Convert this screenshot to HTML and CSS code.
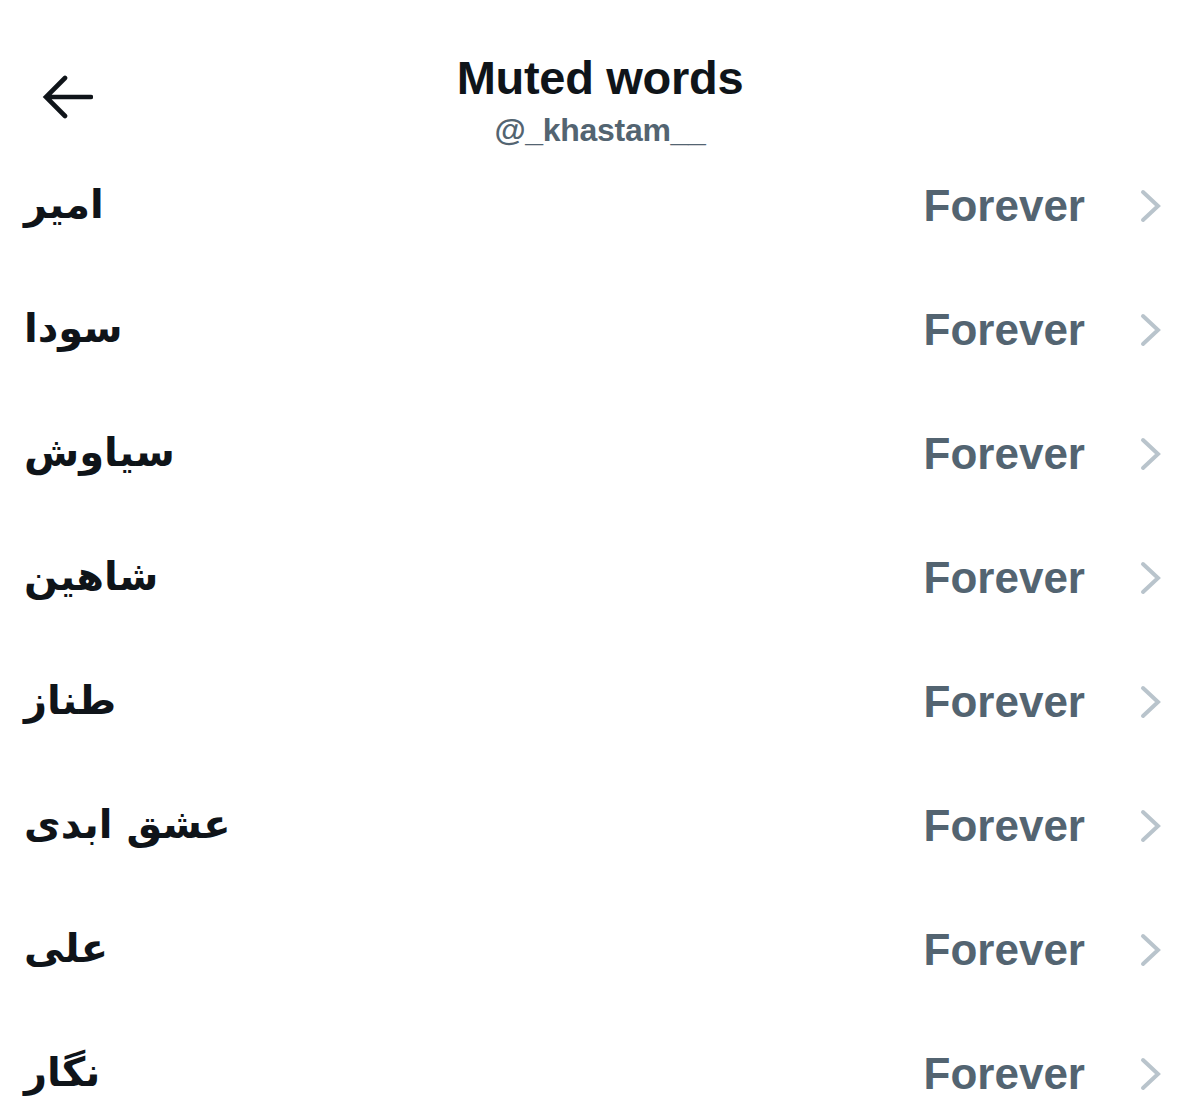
FILE: index.html
```html
<!DOCTYPE html>
<html lang="en">
<head>
<meta charset="utf-8">
<title>Muted words</title>
<link rel="stylesheet" href="styles.css">
</head>
<body>
<header class="topbar">
  <div class="back">
    <svg width="52" height="44" viewBox="0 0 52 44" aria-hidden="true">
      <path d="M50 22H6M24 3L5 22l19 19" fill="none" stroke="#0f1419" stroke-width="4.6" stroke-linecap="round" stroke-linejoin="miter"/>
    </svg>
  </div>
  <div class="titles">
    <div class="title">Muted words</div>
    <div class="handle">@_khastam__</div>
  </div>
  <div class="spacer"></div>
</header>
<main class="list">
  <div class="row"><span class="word" dir="rtl">امیر</span><span class="dur">Forever</span><svg class="chev" width="24" height="36" viewBox="0 0 24 36"><path d="M4 4l15 14L4 32" fill="none" stroke="#b9c4cc" stroke-width="4" stroke-linecap="round"/></svg></div>
  <div class="row"><span class="word" dir="rtl">سودا</span><span class="dur">Forever</span><svg class="chev" width="24" height="36" viewBox="0 0 24 36"><path d="M4 4l15 14L4 32" fill="none" stroke="#b9c4cc" stroke-width="4" stroke-linecap="round"/></svg></div>
  <div class="row"><span class="word" dir="rtl">سیاوش</span><span class="dur">Forever</span><svg class="chev" width="24" height="36" viewBox="0 0 24 36"><path d="M4 4l15 14L4 32" fill="none" stroke="#b9c4cc" stroke-width="4" stroke-linecap="round"/></svg></div>
  <div class="row"><span class="word" dir="rtl">شاهین</span><span class="dur">Forever</span><svg class="chev" width="24" height="36" viewBox="0 0 24 36"><path d="M4 4l15 14L4 32" fill="none" stroke="#b9c4cc" stroke-width="4" stroke-linecap="round"/></svg></div>
  <div class="row"><span class="word" dir="rtl">طناز</span><span class="dur">Forever</span><svg class="chev" width="24" height="36" viewBox="0 0 24 36"><path d="M4 4l15 14L4 32" fill="none" stroke="#b9c4cc" stroke-width="4" stroke-linecap="round"/></svg></div>
  <div class="row"><span class="word" dir="rtl">عشق ابدی</span><span class="dur">Forever</span><svg class="chev" width="24" height="36" viewBox="0 0 24 36"><path d="M4 4l15 14L4 32" fill="none" stroke="#b9c4cc" stroke-width="4" stroke-linecap="round"/></svg></div>
  <div class="row"><span class="word" dir="rtl">علی</span><span class="dur">Forever</span><svg class="chev" width="24" height="36" viewBox="0 0 24 36"><path d="M4 4l15 14L4 32" fill="none" stroke="#b9c4cc" stroke-width="4" stroke-linecap="round"/></svg></div>
  <div class="row"><span class="word" dir="rtl">نگار</span><span class="dur">Forever</span><svg class="chev" width="24" height="36" viewBox="0 0 24 36"><path d="M4 4l15 14L4 32" fill="none" stroke="#b9c4cc" stroke-width="4" stroke-linecap="round"/></svg></div>
</main>
</body>
</html>
```
FILE: styles.css
```css
html, body {
  margin: 0;
  padding: 0;
  background: #ffffff;
}
body {
  width: 1200px;
  height: 1120px;
  overflow: hidden;
  font-family: "Liberation Sans", Arial, sans-serif;
  color: #0f1419;
}
.topbar {
  display: grid;
  grid-template-columns: 200px 1fr 200px;
  align-items: start;
  height: 144px;
}
.back {
  padding: 75px 0 0 41px;
  line-height: 0;
}
.titles {
  display: flex;
  flex-direction: column;
  align-items: center;
  padding-top: 52px;
}
.title {
  font-size: 47px;
  font-weight: 700;
  line-height: 52px;
  letter-spacing: -0.3px;
}
.handle {
  font-size: 32px;
  font-weight: 700;
  line-height: 36px;
  color: #536471;
  margin-top: 8px;
  letter-spacing: -0.3px;
}
.list {
  display: flex;
  flex-direction: column;
}
.row {
  display: flex;
  align-items: center;
  height: 124px;
  padding: 0 37px 0 24px;
}
.word {
  flex: 1;
  text-align: left;
  font-family: "DejaVu Sans", sans-serif;
  font-size: 40px;
  font-weight: 700;
  color: #0f1419;
  margin-top: -4px;
}
.word[dir="rtl"] {
  direction: rtl;
  unicode-bidi: isolate;
}
.dur {
  font-size: 44px;
  font-weight: 700;
  color: #536471;
  margin-right: 54px;
}
.chev {
  display: block;
}
```
